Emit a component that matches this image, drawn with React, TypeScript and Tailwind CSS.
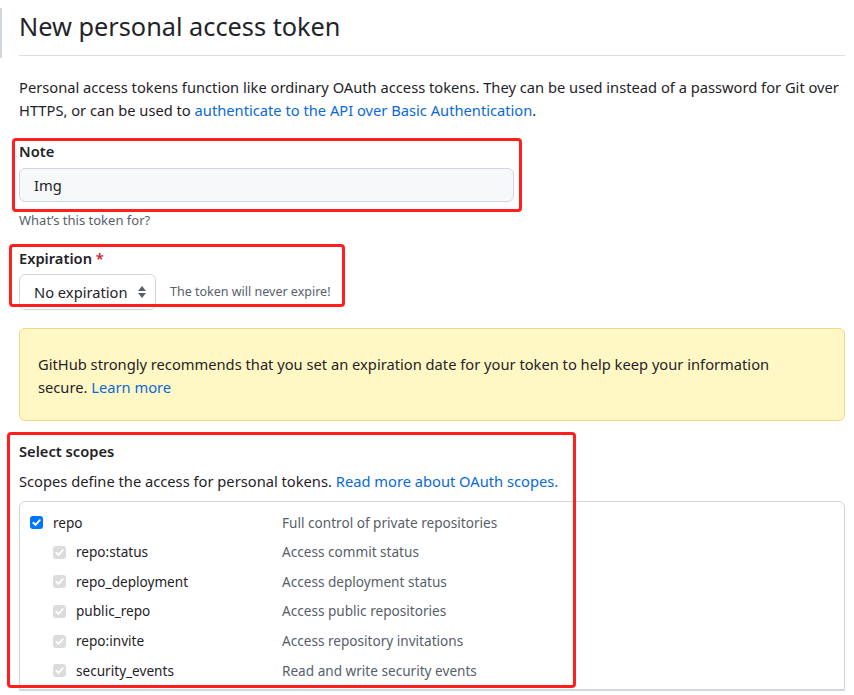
import React from "react";

const font = { fontFamily: '"Noto Sans", "Open Sans", Arial, sans-serif' };

function Check({ disabled }: { disabled?: boolean }) {
  return (
    <span
      className={
        "flex h-[13px] w-[13px] items-center justify-center rounded-[3px] " +
        (disabled ? "bg-[#dcdcdc]" : "bg-[#0075ff]")
      }
    >
      <svg width="11" height="11" viewBox="0 0 12 12" fill="none">
        <path d="M2.5 6.3 L5 8.7 L9.6 3.4" stroke="white" strokeWidth="2" strokeLinecap="round" strokeLinejoin="round" />
      </svg>
    </span>
  );
}

const scopes = [
  { name: "repo", desc: "Full control of private repositories", parent: true },
  { name: "repo:status", desc: "Access commit status" },
  { name: "repo_deployment", desc: "Access deployment status" },
  { name: "public_repo", desc: "Access public repositories" },
  { name: "repo:invite", desc: "Access repository invitations" },
  { name: "security_events", desc: "Read and write security events" },
];

export default function App() {
  return (
    <div className="relative h-[695px] w-[854px] overflow-hidden bg-white text-[#1f2328]" style={font}>
      <div className="absolute left-0 top-[8px] h-[50px] w-[2px] bg-[#d0d7de]" />
      <div className="pl-[19px] pr-[9px]">
        <h1 className="pt-[9px] pb-[12px] text-[25.3px] leading-[34px] font-normal text-[#1f2328]">New personal access token</h1>
        <div className="h-px bg-[#d8dee4]" />
        <p className="mt-[20px] text-[14.7px] leading-[23px]">
          Personal access tokens function like ordinary OAuth access tokens. They can be used instead of a password for Git over HTTPS, or can be used to{" "}
          <a className="text-[#0969da]">authenticate to the API over Basic Authentication</a>.
        </p>

        <div className="mt-[18px] text-[14.7px] font-semibold leading-[22px]">Note</div>
        <div className="mt-[6px] flex h-[34px] w-[495px] items-center rounded-[6px] border border-[#d0d7de] bg-[#f6f8fa] px-[14px] text-[14.7px]">
          Img
        </div>
        <div className="mt-[9px] text-[13px] leading-[18px] text-[#57606a]">What’s this token for?</div>

        <div className="mt-[18px] text-[14.7px] font-semibold leading-[22px]">
          Expiration <span className="text-[#cf222e]">*</span>
        </div>
        <div className="mt-[5px] flex items-center gap-[14px]">
          <div className="flex h-[36px] w-[137px] items-center justify-between rounded-[6px] border border-[#d0d7de] bg-white pl-[14px] pr-[8px] text-[14.7px]">
            <span>No expiration</span>
            <svg width="10" height="14" viewBox="0 0 10 14">
              <path d="M5 1 L9 6 L1 6 Z" fill="#57606a" />
              <path d="M5 13 L9 8 L1 8 Z" fill="#57606a" />
            </svg>
          </div>
          <span className="text-[12.5px] text-[#57606a]">The token will never expire!</span>
        </div>

        <div className="mt-[18px] h-[93px] rounded-[6px] border border-[#eed888] bg-[#fff8c5] pl-[18px] pr-[32px] pt-[24px] text-[14.7px] leading-[23px]">
          GitHub strongly recommends that you set an expiration date for your token to help keep your information secure.{" "}
          <a className="text-[#0969da]">Learn more</a>
        </div>

        <div className="mt-[19px] text-[14.7px] font-semibold leading-[22px]">Select scopes</div>
        <p className="mt-[8px] text-[14.7px] leading-[22px]">
          Scopes define the access for personal tokens. <a className="text-[#0969da]">Read more about OAuth scopes.</a>
        </p>

        <div className="mt-[9px] rounded-t-[6px] border border-[#d0d7de] pt-[6px] pb-[3px]">
          {scopes.map((s) => (
            <div key={s.name} className="flex h-[29.6px] items-center text-[13.6px]">
              <div className={"flex items-center " + (s.parent ? "pl-[10px] gap-[10px] w-[262px]" : "pl-[33px] gap-[10px] w-[262px]")}>
                <Check disabled={!s.parent} />
                <span className="text-[#1f2328]">{s.name}</span>
              </div>
              <span className="text-[#57606a]">{s.desc}</span>
            </div>
          ))}
        </div>
        <div className="h-px bg-[#d0d7de]" />
      </div>

      {/* annotation boxes */}
      <div className="pointer-events-none absolute left-[12px] top-[138px] h-[74px] w-[510px] rounded-[4px] border-[3px] border-[#ff1f1f]" />
      <div className="pointer-events-none absolute left-[9px] top-[244px] h-[63px] w-[336px] rounded-[4px] border-[3px] border-[#ff1f1f]" />
      <div className="pointer-events-none absolute left-[7px] top-[432px] h-[256px] w-[569px] rounded-[4px] border-[3px] border-[#ff1f1f]" />
    </div>
  );
}
